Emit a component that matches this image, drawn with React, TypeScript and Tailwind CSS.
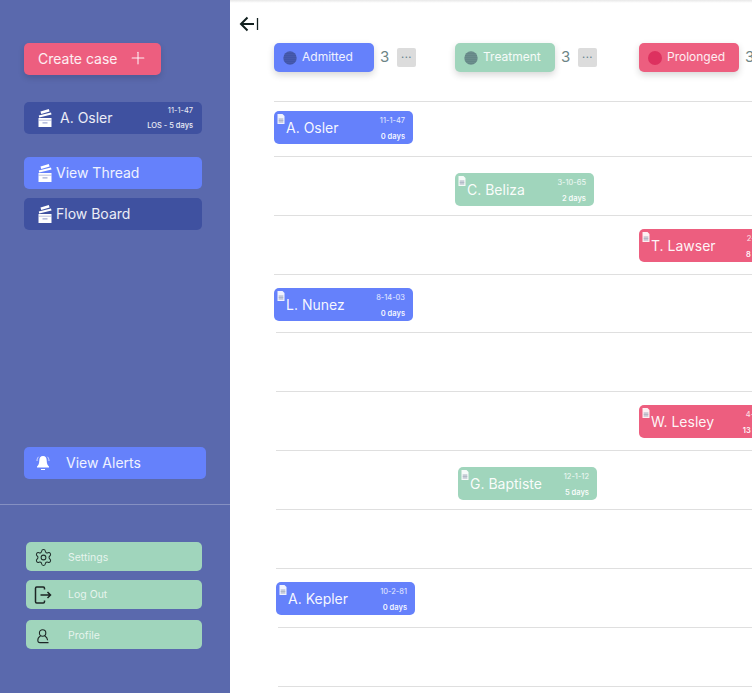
import { Settings, Plus } from 'lucide-react';

const FONT = "font-['Inter','Noto_Sans',sans-serif]";

function TrayIcon() {
  return (
    <svg width="14" height="18" viewBox="0 0 14 18" className="shrink-0">
      <path d="M2.5 2.6 10.8 0 11.6 2.4 3.2 5Z" fill="#fff" />
      <path d="M0.8 6.4 13 3.4 13.5 5.4 1.2 8.4Z" fill="#fff" />
      <path d="M0.5 9H13.5V18H0.5Z" fill="#fff" />
      <path d="M0.5 11.2H13.5" stroke="#8b96c8" strokeWidth="0.6" />
      <path d="M4.5 13.4H9.5V14.4H4.5Z" fill="#8b96c8" />
    </svg>
  );
}

function DocIcon() {
  return (
    <svg width="8" height="10" viewBox="0 0 8 10" className="absolute left-[3px] top-[3px]">
      <path d="M0.5 0H5.5L7.5 2V10H0.5Z" fill="#fff" opacity="0.9" />
      <path d="M1.5 5H6.5M1.5 6.5H6.5M1.5 8H6.5M3 4.5V8.5M5 4.5V8.5" stroke="#8a93a8" strokeWidth="0.5" />
    </svg>
  );
}

function DottedDot({ id, bg, dot }: { id: string; bg: string; dot: string }) {
  return (
    <svg width="14" height="14" viewBox="0 0 14 14" className="shrink-0">
      <defs>
        <pattern id={id} width="2" height="2" patternUnits="userSpaceOnUse">
          <rect width="2" height="2" fill={bg} />
          <circle cx="1" cy="1" r="0.5" fill={dot} />
        </pattern>
      </defs>
      <circle cx="7" cy="7" r="6.7" fill={`url(#${id})`} />
    </svg>
  );
}

function ColumnHead({ label, count, color, icon, width }: { label: string; count: number; color: string; icon: React.ReactNode; width: string }) {
  return (
    <div className={`flex shrink-0 items-center ${width}`}>
      <div className={`flex h-[29px] w-[100px] shrink-0 items-center gap-[5px] rounded-[5px] pl-[9px] text-[12px] text-white/90 shadow-[0_3px_7px_rgba(0,0,0,0.16)] ${color}`}>
        {icon}
        <span className="-mt-[1px]">{label}</span>
      </div>
      <span className="ml-[6px] w-[10px] shrink-0 text-[15px] text-[#6d8586]">{count}</span>
      <div className="ml-[7px] flex h-[19px] w-[19px] shrink-0 items-center justify-center rounded-[2px] bg-[#dcdcdc] text-[11px] leading-none tracking-[0.5px] text-[#62808c]">
        ···
      </div>
    </div>
  );
}

type RowData = {
  top: string;
  line: string;
  card?: { name: string; date: string; days: string; color: string; left: string };
};

const rows: RowData[] = [
  { top: 'h-[55px] pt-[10px]', line: 'ml-[44px]', card: { name: 'A. Osler', date: '11-1-47', days: '0 days', color: 'bg-[#6581fb]', left: 'ml-[44px]' } },
  { top: 'h-[59px] pt-[17px]', line: 'ml-[44px]', card: { name: 'C. Beliza', date: '3-10-65', days: '2 days', color: 'bg-[#a0d5bc]', left: 'ml-[225px]' } },
  { top: 'h-[59px] pt-[14px]', line: 'ml-[44px]', card: { name: 'T. Lawser', date: '2-1-70', days: '8 days', color: 'bg-[#ed5e7f]', left: 'ml-[409px]' } },
  { top: 'h-[58px] pt-[14px]', line: 'ml-[44px]', card: { name: 'L. Nunez', date: '8-14-03', days: '0 days', color: 'bg-[#6581fb]', left: 'ml-[44px]' } },
  { top: 'h-[59px]', line: 'ml-[46px]' },
  { top: 'h-[59px] pt-[14px]', line: 'ml-[46px]', card: { name: 'W. Lesley', date: '4-1-60', days: '13 days', color: 'bg-[#ed5e7f]', left: 'ml-[409px]' } },
  { top: 'h-[59px] pt-[17px]', line: 'ml-[46px]', card: { name: 'G. Baptiste', date: '12-1-12', days: '5 days', color: 'bg-[#a0d5bc]', left: 'ml-[228px]' } },
  { top: 'h-[59px]', line: 'ml-[46px]' },
  { top: 'h-[59px] pt-[14px]', line: 'ml-[46px]', card: { name: 'A. Kepler', date: '10-2-81', days: '0 days', color: 'bg-[#6581fb]', left: 'ml-[46px]' } },
  { top: 'h-[59px]', line: 'ml-[48px]' },
  { top: 'h-[7px]', line: 'ml-[48px]' },
];

function CaseCard({ name, date, days, color, left }: NonNullable<RowData['card']>) {
  return (
    <div className={`relative h-[33px] w-[139px] shrink-0 rounded-[5px] ${left} ${color}`}>
      <DocIcon />
      <span className="absolute left-[12px] top-[8px] text-[14px] leading-[17px] text-white/95">{name}</span>
      <span className="absolute right-[8px] top-[5px] text-[7.5px] leading-[9px] text-white/85">{date}</span>
      <span className="absolute right-[8px] top-[21px] text-[7.5px] font-semibold leading-[9px] text-white/95">{days}</span>
    </div>
  );
}

function SideButton({ label, active }: { label: string; active?: boolean }) {
  return (
    <div className={`flex h-[32px] w-[178px] items-center gap-[4px] rounded-[5px] pl-[14px] text-[14px] text-white/90 ${active ? 'bg-[#6581fb]' : 'bg-[#3f51a0]'}`}>
      <TrayIcon />
      <span className="-mt-[2px]">{label}</span>
    </div>
  );
}

function FooterButton({ label, icon, className }: { label: string; icon: React.ReactNode; className: string }) {
  return (
    <div className={`flex h-[29px] w-[176px] items-center rounded-[5px] bg-[#a0d5bc] pl-[8px] text-[10.5px] text-white/75 ${className}`}>
      <span className="flex w-[34px] items-center">{icon}</span>
      {label}
    </div>
  );
}

export default function App() {
  return (
    <div className={`flex h-[693px] w-[752px] overflow-hidden bg-white ${FONT}`}>
      {/* Sidebar */}
      <aside className="flex h-full w-[230px] shrink-0 flex-col bg-[#5a69ad] pt-[43px]">
        <div className="ml-[24px] flex h-[32px] w-[137px] items-center rounded-[5px] bg-[#ed5e7f] pb-[2px] pl-[14px] text-[14px] text-white/90 shadow-[0_3px_6px_rgba(0,0,0,0.14)]">
          Create case
          <Plus size={20} strokeWidth={1.3} className="ml-[10px]" />
        </div>

        <div className="relative ml-[24px] mt-[27px] flex h-[32px] w-[178px] items-center gap-[8px] rounded-[5px] bg-[#3f51a0] pl-[14px] text-[14px] text-white/90">
          <TrayIcon />
          <span className="-mt-[2px]">A. Osler</span>
          <span className="absolute right-[9px] top-[4px] text-[7.5px] leading-[9px]">11-1-47</span>
          <span className="absolute right-[9px] top-[19px] text-[7.5px] font-medium leading-[9px]">LOS - 5 days</span>
        </div>

        <div className="ml-[24px] mt-[23px] flex flex-col gap-[9px]">
          <SideButton label="View Thread" active />
          <SideButton label="Flow Board" />
        </div>

        <div className="ml-[24px] mt-[217px] flex h-[32px] w-[182px] items-center rounded-[5px] bg-[#6581fb] pl-[12px] text-[14px] text-white/90">
          <svg width="14" height="16" viewBox="0 0 14 16" className="shrink-0">
            <path d="M7 1C4.4 1 3.3 3 3.3 5.4 3.3 8.4 2.4 10 1 11.6V12.6H13V11.6C11.6 10 10.7 8.4 10.7 5.4 10.7 3 9.6 1 7 1Z" fill="#fff" />
            <path d="M5 14H9V15H5Z" fill="#fff" />
            <path d="M1 6C1 4 1.6 2.8 2.6 1.8M13 6C13 4 12.4 2.8 11.4 1.8" stroke="#fff" strokeWidth="0.7" fill="none" />
          </svg>
          <span className="ml-[16px] -mt-[1px]">View Alerts</span>
        </div>

        <div className="mt-[25px] h-px bg-[#8590c2]" />

        <div className="ml-[26px] mt-[37px] flex flex-col">
          <FooterButton
            label="Settings"
            icon={<Settings size={19} strokeWidth={1.3} className="text-[#20302c]" />}
            className="pt-[2px]"
          />
          <FooterButton
            label="Log Out"
            icon={
              <svg width="18" height="18" viewBox="0 0 18 18" fill="none" stroke="#1c2624" strokeWidth="1.5">
                <path d="M10.5 3.5V2.2C10.5 1.5 10 1 9.3 1H2.7C2 1 1.5 1.5 1.5 2.2V15.8C1.5 16.5 2 17 2.7 17H9.3C10 17 10.5 16.5 10.5 15.8V14.5" />
                <path d="M6.5 9H16.5M13.5 6 16.5 9 13.5 12" />
              </svg>
            }
            className="mt-[9px]"
          />
          <FooterButton
            label="Profile"
            icon={
              <svg width="12" height="15" viewBox="0 0 12 15" fill="none" stroke="#1c2624" strokeWidth="1.1" className="ml-[3px]">
                <circle cx="5.6" cy="4" r="3.2" />
                <path d="M3.5 7C1.6 8 .8 9.6.8 11.2 .8 12.5 1.6 13.6 3 13.6H11.5M7.8 7C9.5 7.8 10.4 9.5 10.6 11.2" />
              </svg>
            }
            className="mt-[11px] pt-[3px]"
          />
        </div>
      </aside>

      {/* Flow board */}
      <main className="relative min-w-0 flex-1 overflow-hidden">
        <div className="absolute inset-x-0 top-0 h-[3px] bg-gradient-to-b from-[#e8e8e8] to-white" />
        <svg width="20" height="16" viewBox="0 0 20 16" fill="none" stroke="#12201f" strokeWidth="2" className="ml-[9px] mt-[16px]">
          <path d="M8.5 1.5 2 8 8.5 14.5" />
          <path d="M2 8H15" />
          <path d="M18.5 2V14" strokeWidth="1.3" />
        </svg>

        <div className="ml-[44px] mt-[11px] flex">
          <ColumnHead
            label="Admitted"
            count={3}
            color="bg-[#6581fb]"
            width="w-[181px]"
            icon={<DottedDot id="blue-dots" bg="#33479b" dot="#8c9eee" />}
          />
          <ColumnHead
            label="Treatment"
            count={3}
            color="bg-[#a0d5bc]"
            width="w-[184px]"
            icon={<DottedDot id="green-dots" bg="#54787a" dot="#c0dcd0" />}
          />
          <ColumnHead
            label="Prolonged"
            count={3}
            color="bg-[#ed5e7f]"
            width="w-[184px]"
            icon={<span className="h-[14px] w-[14px] shrink-0 rounded-full bg-[#dd315f]" />}
          />
        </div>

        <div className="mt-[29px] flex flex-col">
          {rows.map((row, i) => (
            <div key={i} className={`relative flex ${row.top}`}>
              <div className={`absolute inset-x-0 top-0 h-px bg-[#dfdfdf] ${row.line}`} />
              {row.card && <CaseCard {...row.card} />}
            </div>
          ))}
        </div>
      </main>
    </div>
  );
}
